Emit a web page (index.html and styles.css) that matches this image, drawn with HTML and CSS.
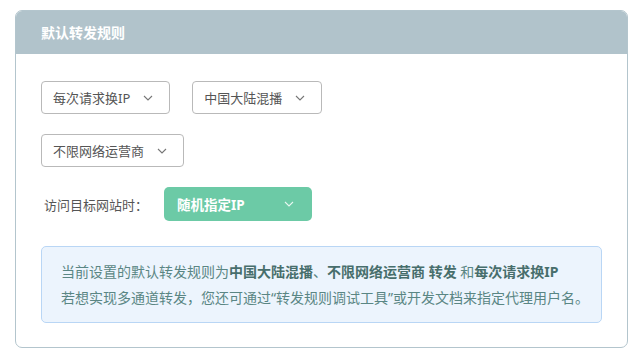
FILE: index.html
```html
<!DOCTYPE html>
<html lang="zh-CN">

<head>
    <meta charset="UTF-8">
    <meta name="viewport" content="width=device-width, initial-scale=1.0">
    <title>默认转发规则</title>
    <link rel="stylesheet" href="styles.css">
</head>

<body>
    <div class="card">
        <div class="card-header">默认转发规则</div>
        <div class="card-body">
            <div class="row">
                <div class="select">
                    <span>每次请求换IP</span>
                    <svg class="chevron" width="10" height="6" viewBox="0 0 10 6"><path d="M1 1l4 4 4-4" fill="none" stroke="currentColor" stroke-width="1.1"/></svg>
                </div>
                <div class="select">
                    <span>中国大陆混播</span>
                    <svg class="chevron" width="10" height="6" viewBox="0 0 10 6"><path d="M1 1l4 4 4-4" fill="none" stroke="currentColor" stroke-width="1.1"/></svg>
                </div>
            </div>
            <div class="row">
                <div class="select">
                    <span>不限网络运营商</span>
                    <svg class="chevron" width="10" height="6" viewBox="0 0 10 6"><path d="M1 1l4 4 4-4" fill="none" stroke="currentColor" stroke-width="1.1"/></svg>
                </div>
            </div>
            <div class="row target">
                <label>访问目标网站时：</label>
                <div class="select green">
                    <span>随机指定IP</span>
                    <svg class="chevron" width="10" height="6" viewBox="0 0 10 6"><path d="M1 1l4 4 4-4" fill="none" stroke="currentColor" stroke-width="1.1"/></svg>
                </div>
            </div>
            <div class="notice">
                <p>当前设置的默认转发规则为<b>中国大陆混播</b>、<b>不限网络运营商 转发</b> 和<b>每次请求换IP</b></p>
                <p>若想实现多通道转发，您还可通过“转发规则调试工具”或开发文档来指定代理用户名。</p>
            </div>
        </div>
    </div>
</body>

</html>
```

FILE: styles.css
```css
body {
    font-family: "Noto Sans", "Noto Sans CJK SC", sans-serif;
    background-color: #ffffff;
    margin: 0;
    padding: 10px 15px;
}

.card {
    width: 613px;
    height: 338px;
    box-sizing: border-box;
    border: 1px solid #b3c5cd;
    border-radius: 7px;
    overflow: hidden;
}

.card-header {
    height: 43px;
    background-color: #b1c3cb;
    color: #ffffff;
    font-size: 14px;
    font-weight: bold;
    line-height: 43px;
    padding-left: 25px;
}

.card-body {
    padding: 27px 25px 25px;
    display: flex;
    flex-direction: column;
    gap: 20px;
}

.row {
    display: flex;
    gap: 22px;
    align-items: center;
}

.select {
    height: 33px;
    box-sizing: border-box;
    border: 1px solid #b9b9b9;
    border-radius: 4px;
    padding: 0 16px 0 11px;
    display: flex;
    align-items: center;
    gap: 13px;
    font-size: 13px;
    color: #555555;
}

.chevron {
    color: #777777;
}

.target {
    gap: 16px;
}

.target label {
    font-size: 13px;
    color: #555555;
    padding-left: 3px;
}

.select.green {
    width: 148px;
    height: 34px;
    border: none;
    background-color: #6ccaa6;
    color: #ffffff;
    font-weight: bold;
    font-size: 13.5px;
    padding-left: 13px;
    padding-right: 18px;
    justify-content: space-between;
    border-radius: 5px;
}

.select.green .chevron {
    color: #e6f7f0;
}

.notice {
    margin-top: 5px;
    background-color: #ecf4fd;
    border: 1px solid #b9d6f5;
    border-radius: 5px;
    padding: 12px 10px 11px 19px;
    color: #5a8684;
    font-size: 14px;
}

.notice p {
    margin: 0;
    line-height: 26px;
    white-space: nowrap;
}

.notice b {
    color: #476e6c;
}
```
